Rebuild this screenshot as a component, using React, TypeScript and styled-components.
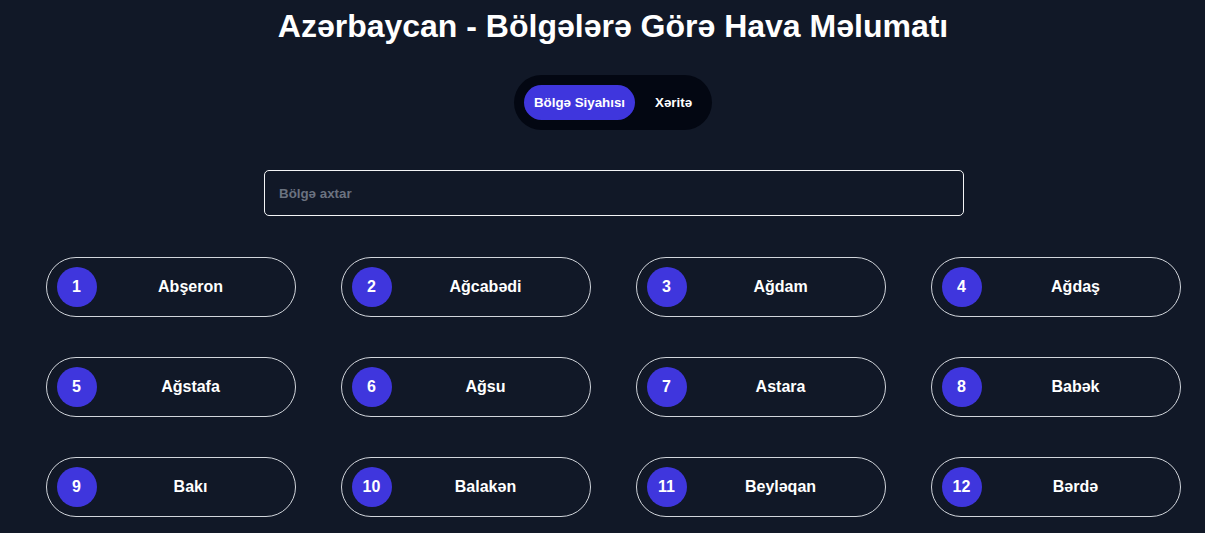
import React from "react";
import styled, { createGlobalStyle } from "styled-components";

const Global = createGlobalStyle`
  html, body { margin: 0; padding: 0; background: #111827; }
  body { font-family: "Liberation Sans", Arial, sans-serif; color: #fff; }
  * { box-sizing: border-box; }
`;

const Page = styled.div`
  min-height: 533px;
  background: #111827;
  padding: 8px 0 0 21px;
  display: flex;
  flex-direction: column;
  align-items: center;
`;

const Title = styled.h1`
  margin: 0;
  font-size: 32px;
  line-height: 37px;
  font-weight: 700;
  color: #fff;
  text-align: center;
`;

const Toggle = styled.div`
  margin-top: 30px;
  display: flex;
  align-items: center;
  gap: 10px;
  padding: 10px;
  height: 55px;
  border-radius: 9999px;
  background: #030712;
`;

const ToggleButton = styled.button<{ $active?: boolean }>`
  height: 35px;
  padding: 0 10px;
  border: none;
  border-radius: 9999px;
  font-family: "Liberation Sans", Arial, sans-serif;
  font-size: 13.33px;
  font-weight: 700;
  color: #fff;
  background: ${(p) => (p.$active ? "#3f36dd" : "transparent")};
  cursor: pointer;
`;

const Search = styled.input`
  margin-top: 40px;
  margin-left: 2px;
  width: 700px;
  height: 46px;
  border: 1px solid #f3f4f6;
  border-radius: 5px;
  background: transparent;
  padding: 0 14px;
  font-family: "Liberation Sans", Arial, sans-serif;
  font-size: 13.33px;
  font-weight: 700;
  color: #fff;
  outline: none;
  &::placeholder { color: #6b7280; }
`;

const Grid = styled.div`
  margin-top: 41px;
  display: grid;
  grid-template-columns: repeat(4, 250px);
  column-gap: 45px;
  row-gap: 40px;
`;

const Card = styled.div`
  height: 60px;
  border: 1px solid #d1d5db;
  border-radius: 30px;
  padding: 0 10px;
  display: flex;
  align-items: center;
`;

const Badge = styled.div`
  width: 40px;
  height: 40px;
  border-radius: 50%;
  background: #3f36dd;
  display: flex;
  align-items: center;
  justify-content: center;
  font-size: 16px;
  font-weight: 700;
  color: #fff;
  flex-shrink: 0;
`;

const Name = styled.div`
  flex: 1;
  text-align: center;
  font-size: 16px;
  font-weight: 700;
  color: #fff;
`;

const regions = [
  "Abşeron", "Ağcabədi", "Ağdam", "Ağdaş",
  "Ağstafa", "Ağsu", "Astara", "Babək",
  "Bakı", "Balakən", "Beyləqan", "Bərdə",
];

export default function App() {
  return (
    <>
      <Global />
      <Page>
        <Title>Azərbaycan - Bölgələrə Görə Hava Məlumatı</Title>
        <Toggle>
          <ToggleButton $active>Bölgə Siyahısı</ToggleButton>
          <ToggleButton>Xəritə</ToggleButton>
        </Toggle>
        <Search placeholder="Bölgə axtar" />
        <Grid>
          {regions.map((r, i) => (
            <Card key={r}>
              <Badge>{i + 1}</Badge>
              <Name>{r}</Name>
            </Card>
          ))}
        </Grid>
      </Page>
    </>
  );
}
